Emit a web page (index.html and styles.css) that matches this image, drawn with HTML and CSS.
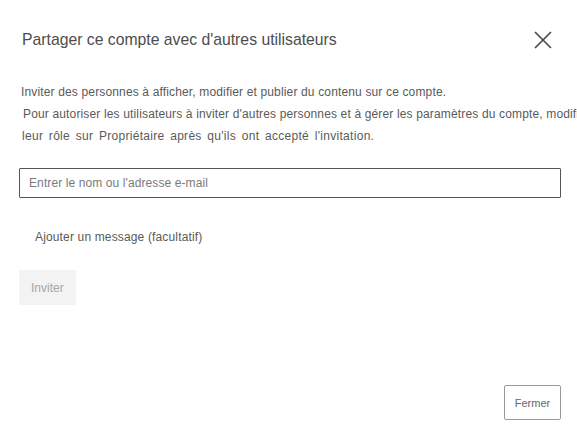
FILE: index.html
```html
<!DOCTYPE html>
<html lang="fr">
<head>
<meta charset="utf-8">
<title>Partager ce compte</title>
<link rel="stylesheet" href="styles.css">
</head>
<body>
<div class="dialog">
  <div class="header">
    <h1 class="title">Partager ce compte avec d'autres utilisateurs</h1>
    <button class="close" aria-label="Fermer">
      <svg width="18" height="18" viewBox="0 0 18 18"><path d="M1 1L17 17M17 1L1 17" stroke="#444" stroke-width="1.6" fill="none"/></svg>
    </button>
  </div>
  <div class="intro">
    <p class="line l1">Inviter des personnes à afficher, modifier et publier du contenu sur ce compte.</p>
    <p class="line l2">Pour autoriser les utilisateurs à inviter d'autres personnes et à gérer les paramètres du compte, modifiez</p>
    <p class="line l3">leur rôle sur Propriétaire après qu'ils ont accepté l'invitation.</p>
  </div>
  <input class="field" type="text" placeholder="Entrer le nom ou l'adresse e-mail">
  <div class="message">Ajouter un message (facultatif)</div>
  <button class="invite" disabled>Inviter</button>
  <button class="dismiss">Fermer</button>
</div>
</body>
</html>
```
FILE: styles.css
```css
html, body {
  margin: 0;
  background: #fff;
  overflow: hidden;
}
.dialog {
  box-sizing: border-box;
  height: 442px;
  padding: 28px 16px 22px 19px;
  display: flex;
  flex-direction: column;
  align-items: flex-start;
  font-family: "Liberation Sans", Arial, sans-serif;
  color: #5a5a5a;
}
.header {
  width: 100%;
  box-sizing: border-box;
  display: flex;
  justify-content: space-between;
  align-items: center;
  padding: 0 9px 0 3px;
}
.title {
  margin: 0;
  font-size: 15.75px;
  font-weight: normal;
  line-height: 24px;
  color: #4d4d4d;
}
.close {
  border: 0;
  background: none;
  padding: 0;
  width: 18px;
  height: 18px;
  display: block;
}
.close svg { display: block; }
.intro {
  margin-top: 29px;
  width: 100%;
}
.line {
  margin: 0;
  font-size: 12px;
  line-height: 22px;
  white-space: nowrap;
  letter-spacing: 0.15px;
  color: #5a5a5a;
}
.l1 { padding-left: 2px; }
.l2 { padding-left: 4px; }
.l3 { padding-left: 3px; word-spacing: 2px; letter-spacing: 0.3px; }
.field {
  margin-top: 21px;
  box-sizing: border-box;
  width: 542px;
  height: 30px;
  border: 1px solid #555;
  border-radius: 1px;
  padding: 0 9px;
  font-family: "Liberation Sans", Arial, sans-serif;
  font-size: 12px;
  letter-spacing: 0.1px;
  color: #333;
  outline: none;
}
.field::placeholder { color: #7a7a7a; }
.message {
  margin-top: 31px;
  padding-left: 16px;
  font-size: 12px;
  line-height: 16px;
  letter-spacing: 0.15px;
  color: #5a5a5a;
}
.invite {
  margin-top: 25px;
  box-sizing: border-box;
  width: 57px;
  height: 35px;
  border: 0;
  background: #f3f3f3;
  color: #a6a6a6;
  font-family: "Liberation Sans", Arial, sans-serif;
  font-size: 12px;
  text-align: left;
  padding: 0 12px;
}
.dismiss {
  margin-top: auto;
  align-self: flex-end;
  box-sizing: border-box;
  width: 57px;
  height: 35px;
  border: 1px solid #999;
  border-radius: 2px;
  background: #fff;
  color: #666;
  font-family: "Liberation Sans", Arial, sans-serif;
  font-size: 11px;
  padding: 0;
}
```
